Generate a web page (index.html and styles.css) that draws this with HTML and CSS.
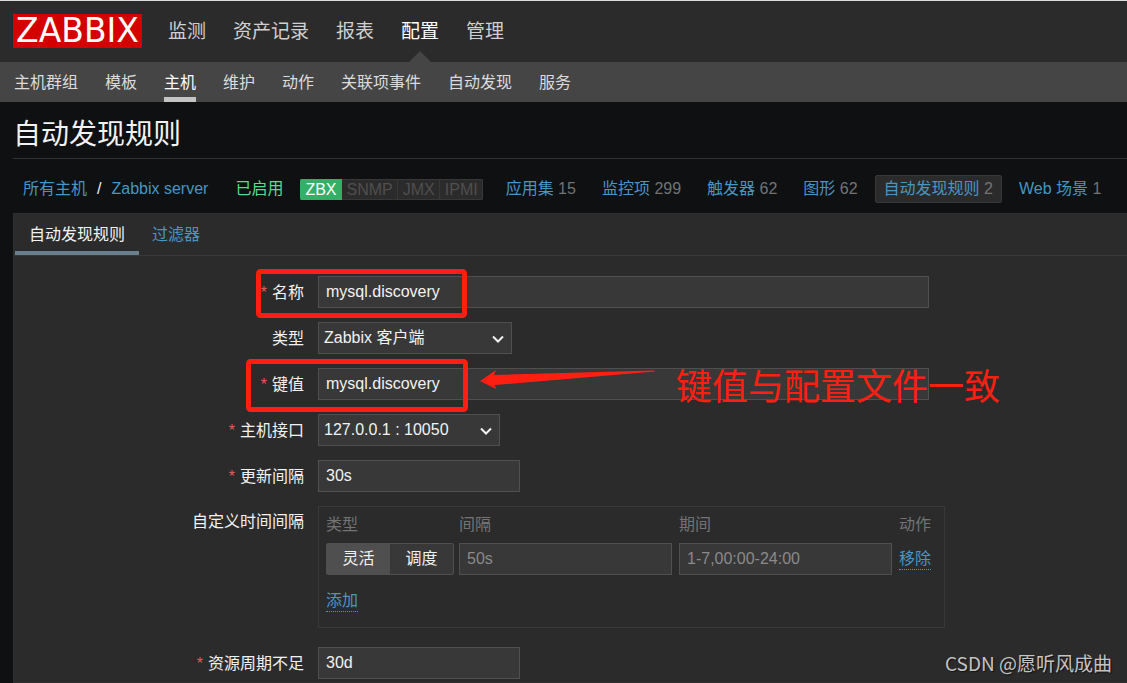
FILE: index.html
```html
<!DOCTYPE html>
<html lang="zh-CN">
<head>
<meta charset="utf-8">
<title>自动发现规则</title>
<link rel="stylesheet" href="styles.css">
</head>
<body>
<header class="top">
  <a class="logo" href="#">ZABBIX</a>
  <nav class="main-nav">
    <a href="#">监测</a>
    <a href="#">资产记录</a>
    <a href="#">报表</a>
    <a class="active" href="#">配置</a>
    <a href="#">管理</a>
  </nav>
</header>
<nav class="sub-nav">
  <a href="#">主机群组</a>
  <a href="#">模板</a>
  <a class="active" href="#">主机</a>
  <a href="#">维护</a>
  <a href="#">动作</a>
  <a href="#">关联项事件</a>
  <a href="#">自动发现</a>
  <a href="#">服务</a>
</nav>
<main>
  <h1>自动发现规则</h1>
  <div class="crumbs">
    <div class="path"><a href="#">所有主机</a><span>/</span><a href="#">Zabbix server</a></div>
    <span class="enabled">已启用</span>
    <div class="badges"><span class="on">ZBX</span><span>SNMP</span><span>JMX</span><span>IPMI</span></div>
    <nav class="objects">
      <span class="object"><a href="#">应用集</a> 15</span>
      <span class="object"><a href="#">监控项</a> 299</span>
      <span class="object"><a href="#">触发器</a> 62</span>
      <span class="object"><a href="#">图形</a> 62</span>
      <span class="object selected"><a href="#">自动发现规则</a> 2</span>
      <span class="object"><a href="#">Web 场景</a> 1</span>
    </nav>
  </div>
  <section class="panel">
    <div class="tabs">
      <a class="active" href="#">自动发现规则</a>
      <a href="#">过滤器</a>
    </div>
    <form class="form">
      <label class="required" for="name">名称</label>
      <input class="wide" id="name" type="text" value="mysql.discovery">

      <label for="type">类型</label>
      <div class="select type-select">
        <select id="type"><option>Zabbix 客户端</option></select>
        <svg width="14" height="10" viewBox="0 0 14 10"><path d="M2 2.5 7 7.5 12 2.5" fill="none" stroke="#f2f2f2" stroke-width="2"/></svg>
      </div>

      <label class="required" for="key">键值</label>
      <input class="wide" id="key" type="text" value="mysql.discovery">

      <label class="required" for="interface">主机接口</label>
      <div class="select interface-select">
        <select id="interface"><option>127.0.0.1 : 10050</option></select>
        <svg width="14" height="10" viewBox="0 0 14 10"><path d="M2 2.5 7 7.5 12 2.5" fill="none" stroke="#f2f2f2" stroke-width="2"/></svg>
      </div>

      <label class="required" for="delay">更新间隔</label>
      <input class="short" id="delay" type="text" value="30s">

      <span class="label top-label" id="custom">自定义时间间隔</span>
      <div class="intervals">
        <table aria-labelledby="custom">
          <thead><tr><th class="col-type">类型</th><th class="col-value">间隔</th><th class="col-value">期间</th><th>动作</th></tr></thead>
          <tbody>
            <tr>
              <td>
                <div class="toggle">
                  <input type="radio" name="kind" id="flexible" checked><label for="flexible">灵活</label>
                  <input type="radio" name="kind" id="scheduling"><label for="scheduling">调度</label>
                </div>
              </td>
              <td><input class="cell" type="text" placeholder="50s" aria-label="间隔"></td>
              <td><input class="cell" type="text" placeholder="1-7,00:00-24:00" aria-label="期间"></td>
              <td><button class="link" type="button">移除</button></td>
            </tr>
            <tr><td class="add" colspan="4"><button class="link" type="button">添加</button></td></tr>
          </tbody>
        </table>
      </div>

      <label class="required" for="lifetime">资源周期不足</label>
      <input class="short" id="lifetime" type="text" value="30d">

      <svg class="marks" width="500" height="160" viewBox="0 0 500 160">
        <g fill="none" stroke="#ff1f12" stroke-width="5">
          <rect x="44.500" y="15.500" width="206" height="44" rx="2"/>
          <rect x="34.500" y="105.500" width="217" height="48" rx="2"/>
        </g>
        <path d="M266 125 282 114 280 119 440 114.500 441 115.500 281 129 282 133Z" fill="#ff1f12"/>
      </svg>
      <span class="note">键值与配置文件一致</span>
    </form>
  </section>
</main>
<div class="watermark">CSDN @愿听风成曲</div>
</body>
</html>
```
FILE: styles.css
```css
* { box-sizing: border-box; }
html { height: 100%; }
body {
  margin: 0;
  height: 100%;
  overflow: hidden;
  display: flex;
  flex-direction: column;
  background: #0e1012;
  color: #f2f2f2;
  font: 16px/20px "Liberation Sans", "Noto Sans CJK SC", sans-serif;
}
a { color: #4796c4; text-decoration: none; }
input, select, button { font: inherit; color: inherit; }

.top {
  flex: none;
  display: flex;
  align-items: center;
  height: 62px;
  padding-left: 13px;
  background: #2b2b2b;
  border-top: 1px solid #dcdcdc;
}
.logo {
  width: 129px;
  height: 34px;
  margin-bottom: 2px;
  background: #d40000;
  color: #fff;
  font: 33px/34px "DejaVu Sans", sans-serif;
  text-align: center;
}
.main-nav {
  align-self: stretch;
  display: flex;
  gap: 27px;
  margin-left: 26px;
  font-size: 19px;
  line-height: 61px;
}
.main-nav a { position: relative; color: #d0d0d0; }
.main-nav .active { color: #fff; }
.main-nav .active::after {
  content: "";
  position: absolute;
  left: 50%;
  bottom: 0;
  margin-left: -11px;
  border: 11px solid transparent;
  border-top: 0;
  border-bottom-color: #454545;
}
.sub-nav {
  flex: none;
  display: flex;
  gap: 27px;
  height: 40px;
  padding-left: 14px;
  background: #454545;
  line-height: 42px;
}
.sub-nav a { color: #dcdcdc; }
.sub-nav .active { color: #fff; border-bottom: 5px solid #c4c4c4; }

main {
  flex: 1;
  display: flex;
  flex-direction: column;
  min-height: 0;
  padding-left: 13px;
}
h1 {
  flex: none;
  margin: 0;
  height: 57px;
  border-bottom: 1px solid #303234;
  font-size: 28px;
  line-height: 65px;
  font-weight: 400;
}
.crumbs {
  flex: none;
  display: flex;
  align-items: center;
  height: 54px;
  padding: 6px 0 0 10px;
  white-space: nowrap;
}
.path { display: flex; gap: 10px; }
.enabled { margin: 0 17px 0 27px; color: #59db8f; }
.badges {
  display: flex;
  border-radius: 2px;
  overflow: hidden;
  line-height: 19px;
}
.badges span {
  padding: 0 4px 0 5px;
  border: 1px solid #383838;
  border-left-width: 0;
  background: #2b2b2b;
  color: #4f4f4f;
}
.badges .on { background: #34af67; border-color: #34af67; color: #fff; }
.objects { display: flex; gap: 8px; margin-left: 14px; }
.object {
  padding: 3px 8px;
  border: 1px solid transparent;
  border-radius: 2px;
  color: #737373;
}
.selected { background: #2b2b2b; border-color: #383838; }

.panel {
  flex: 1;
  min-height: 0;
  background: #2b2b2b;
  border: 1px solid #303030;
  border-right: 0;
}
.tabs {
  display: flex;
  height: 42px;
  padding-left: 1px;
  border-bottom: 1px solid #383838;
  line-height: 42px;
}
.tabs a { padding: 0 13px; }
.tabs .active { color: #f2f2f2; border-bottom: 4px solid #69808d; padding: 0 14px; }

.form {
  position: relative;
  display: grid;
  grid-template-columns: 290px 1fr;
  column-gap: 14px;
  row-gap: 14px;
  justify-items: start;
  align-items: center;
  padding-top: 20px;
}
.form > label, .label { justify-self: end; padding-top: 2px; }
.form > .top-label { align-self: start; padding-top: 6px; }
.required::before { content: "*"; color: #e45959; margin-right: 5px; }
input[type="text"], select {
  height: 32px;
  padding: 0 7px;
  background: #383838;
  border: 1px solid #4f4f4f;
  border-radius: 0;
  outline: 0;
}
.wide { width: 611px; }
.short { width: 202px; }
.select { position: relative; }
.select select { appearance: none; width: 100%; padding: 0 5px; display: block; }
.select svg { position: absolute; right: 7px; top: 12px; pointer-events: none; }
.type-select { width: 194px; }
.interface-select { width: 182px; }

.intervals {
  padding: 5px 6px 6px 7px;
  border: 1px solid #383838;
  margin-bottom: 5px;
}
table { border-collapse: collapse; }
th {
  height: 25px;
  padding: 0;
  text-align: left;
  font-weight: 400;
  color: #737373;
}
td { padding: 6px 0 0; }
th:last-child { width: 39px; }
.col-type { width: 133px; }
.col-value { width: 220px; }
.cell { display: block; width: 213px; }
.cell::placeholder { color: #8a8a8a; opacity: 1; }
.toggle {
  display: flex;
  width: 128px;
  border: 1px solid #4f4f4f;
  border-radius: 2px;
  background: #383838;
}
.toggle input { position: absolute; opacity: 0; }
.toggle label { flex: 1; text-align: center; line-height: 30px; }
.toggle input:checked + label { background: #4f4f4f; }
.link {
  padding: 0;
  border: 0;
  border-bottom: 1px dotted #4796c4;
  background: none;
  color: #4796c4;
  line-height: 21px;
}
.add { padding: 15px 0 9px; }

.marks { position: absolute; left: 200px; top: 0; pointer-events: none; }
.note {
  position: absolute;
  left: 662px;
  top: 112px;
  color: #ff1f12;
  font-size: 36px;
  line-height: 40px;
  white-space: nowrap;
}
.watermark {
  position: absolute;
  right: 15px;
  bottom: 6px;
  color: #c4c4c4;
  font: 19px/28px "Noto Sans CJK SC", sans-serif;
  text-shadow: 1px 1px 1px #111;
}
```
